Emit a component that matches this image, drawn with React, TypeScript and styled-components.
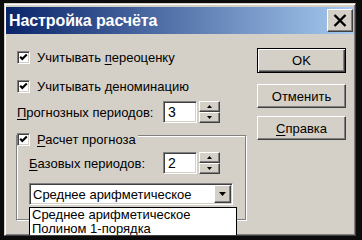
import { FC, ReactNode } from 'react'
import styled, { createGlobalStyle, css } from 'styled-components'

const Global = createGlobalStyle`
  html, body {
    margin: 0;
    padding: 0;
    background: #0c0c0c;
  }
  * {
    box-sizing: border-box;
  }
`

const face = '#d4d0c8'

const raised = css`
  background: ${face};
  border: 1px solid;
  border-color: #fff #404040 #404040 #fff;
  box-shadow: inset -1px -1px 0 #808080, inset 1px 1px 0 ${face};
`

const sunken = css`
  background: #fff;
  border: 1px solid;
  border-color: #808080 #fff #fff #808080;
  box-shadow: inset 1px 1px 0 #404040, inset -1px -1px 0 ${face};
`

const Screen = styled.div`
  width: 362px;
  height: 240px;
  padding: 3px 0 0 4px;
  overflow: hidden;
  background: #0c0c0c;
  font-family: 'Liberation Sans', Arial, sans-serif;
  font-size: 13px;
  color: #000;
`

const Window = styled.div`
  width: 352px;
  height: 233px;
  padding: 3px 1px 1px 1px;
  background: ${face};
  border: 1px solid;
  border-color: ${face} #404040 #404040 ${face};
  box-shadow: inset 1px 1px 0 #fff, inset -1px -1px 0 #808080;
  overflow: hidden;
`

const TitleBar = styled.div`
  height: 27px;
  display: flex;
  align-items: center;
  justify-content: space-between;
  padding: 0 1px 0 3px;
  background: linear-gradient(to right, #0a246a, #a6caf0);
`

const Title = styled.span`
  color: #fff;
  font-weight: bold;
  font-size: 16px;
  letter-spacing: -0.1px;
`

const CloseBtn = styled.div`
  ${raised};
  width: 26px;
  height: 23px;
  display: flex;
  align-items: center;
  justify-content: center;
`

const Body = styled.div`
  display: flex;
`

const LeftCol = styled.div`
  width: 245px;
  padding: 0 0 0 11px;
  display: flex;
  flex-direction: column;
`

const RightCol = styled.div`
  width: 89px;
  margin-left: 6px;
  padding-top: 14px;
  display: flex;
  flex-direction: column;
`

const CheckRow = styled.label<{ $top: number }>`
  height: 20px;
  margin-top: ${({ $top }) => $top}px;
  display: flex;
  align-items: center;
  gap: 7px;
`

const Box = styled.span`
  ${sunken};
  width: 13px;
  height: 13px;
  padding: 1px;
  display: flex;
  flex-shrink: 0;
`

const Acc = styled.span`
  text-decoration: underline;
  text-underline-offset: 2px;
`

const SpinRow = styled.div<{ $top: number; $label: number }>`
  margin-top: ${({ $top }) => $top}px;
  height: 22px;
  display: grid;
  grid-template-columns: ${({ $label }) => $label}px auto;
  align-items: center;
`

const SpinWrap = styled.div`
  display: flex;
  gap: 2px;
`

const Edit = styled.div`
  ${sunken};
  width: 34px;
  height: 22px;
  padding: 2px 0 0 4px;
  font-size: 14px;
  line-height: 17px;
`

const Spin = styled.div`
  width: 21px;
  height: 22px;
  display: flex;
  flex-direction: column;
`

const SpinBtn = styled.div`
  ${raised};
  flex: 1;
  display: flex;
  align-items: center;
  justify-content: center;
`

// etched frame: grey outer line, white inner line
const Group = styled.div`
  position: relative;
  margin: 12px 0 0 -1px;
  width: 231px;
  padding: 16px 12px 15px 12px;
  border: 1px solid #808080;
  border-right-color: #fff;
  border-bottom-color: #fff;
  box-shadow: inset 1px 1px 0 #fff;
`

const GroupInner = styled.div`
  position: absolute;
  inset: 0;
  border-right: 1px solid #808080;
  border-bottom: 1px solid #808080;
  pointer-events: none;
`

const Legend = styled.label`
  position: absolute;
  top: -4px;
  left: 0;
  height: 14px;
  padding-right: 2px;
  display: flex;
  align-items: center;
  gap: 7px;
  background: ${face};
  z-index: 1;
`

const Combo = styled.div`
  position: relative;
  margin-top: 9px;
  width: 204px;
  height: 22px;
`

const ComboField = styled.div`
  ${sunken};
  height: 22px;
  display: flex;
  align-items: center;
  justify-content: space-between;
  padding: 2px 1px 2px 3px;
`

const DropBtn = styled.div`
  ${raised};
  width: 17px;
  height: 18px;
  display: flex;
  align-items: center;
  justify-content: center;
`

const List = styled.div`
  position: absolute;
  top: 24px;
  left: 0;
  width: 208px;
  background: #fff;
  border: 1px solid #000;
  padding: 0 0 0 2px;
  z-index: 2;
`

const Item = styled.div`
  height: 14px;
  line-height: 14px;
`

const Btn = styled.div<{ $def?: boolean; $top: number }>`
  ${raised};
  margin-top: ${({ $top }) => $top}px;
  height: ${({ $def }) => ($def ? 25 : 24)}px;
  display: flex;
  align-items: center;
  justify-content: center;
  ${({ $def }) =>
    $def &&
    css`
      border-color: #000;
      box-shadow: inset 1px 1px 0 #fff, inset -1px -1px 0 #404040,
        inset -2px -2px 0 #808080;
    `}
`

const Tick: FC = () => (
  <svg width="9" height="9" viewBox="0 0 9 9">
    <polyline points="1.2,3.8 3.3,6 7.8,1.4" fill="none" stroke="#000" strokeWidth="2.1" />
  </svg>
)

const Check: FC<{ children: ReactNode }> = ({ children }) => (
  <>
    <Box>
      <Tick />
    </Box>
    <span>{children}</span>
  </>
)

const Arrow: FC<{ up?: boolean; w?: number }> = ({ up, w = 5 }) => {
  const h = Math.ceil(w / 2)
  return (
    <svg width={w} height={h} viewBox={`0 0 ${w} ${h}`}>
      <polygon
        points={up ? `0,${h} ${w},${h} ${w / 2},0` : `0,0 ${w},0 ${w / 2},${h}`}
        fill="#000"
      />
    </svg>
  )
}

const Spinner: FC<{ value: string }> = ({ value }) => (
  <SpinWrap>
    <Edit>{value}</Edit>
    <Spin>
      <SpinBtn>
        <Arrow up />
      </SpinBtn>
      <SpinBtn>
        <Arrow />
      </SpinBtn>
    </Spin>
  </SpinWrap>
)

const App: FC = () => (
  <Screen>
    <Global />
    <Window>
      <TitleBar>
        <Title>Настройка расчёта</Title>
        <CloseBtn>
          <svg width="14" height="13" viewBox="0 0 14 13">
            <path d="M1.5 1 L12.5 12 M12.5 1 L1.5 12" stroke="#000" strokeWidth="2.4" />
          </svg>
        </CloseBtn>
      </TitleBar>
      <Body>
        <LeftCol>
          <CheckRow $top={13}>
            <Check>
              Учитывать <Acc>п</Acc>ереоценку
            </Check>
          </CheckRow>
          <CheckRow $top={9}>
            <Check>
              Учитывать <Acc>д</Acc>еноминацию
            </Check>
          </CheckRow>
          <SpinRow $top={5} $label={146}>
            <span>
              <Acc>П</Acc>рогнозных периодов:
            </span>
            <Spinner value="3" />
          </SpinRow>
          <Group>
            <GroupInner />
            <Legend>
              <Check>
                <Acc>Р</Acc>асчет прогноза
              </Check>
            </Legend>
            <SpinRow $top={0} $label={134}>
              <span>
                <Acc>Б</Acc>азовых периодов:
              </span>
              <Spinner value="2" />
            </SpinRow>
            <Combo>
              <ComboField>
                <span>Среднее арифметическое</span>
                <DropBtn>
                  <Arrow w={7} />
                </DropBtn>
              </ComboField>
              <List>
                <Item>Среднее арифметическое</Item>
                <Item>Полином 1-порядка</Item>
              </List>
            </Combo>
          </Group>
        </LeftCol>
        <RightCol>
          <Btn $def $top={0}>OK</Btn>
          <Btn $top={11}>Отменить</Btn>
          <Btn $top={8}>
            <span>
              <Acc>С</Acc>правка
            </span>
          </Btn>
        </RightCol>
      </Body>
    </Window>
  </Screen>
)

export default App
